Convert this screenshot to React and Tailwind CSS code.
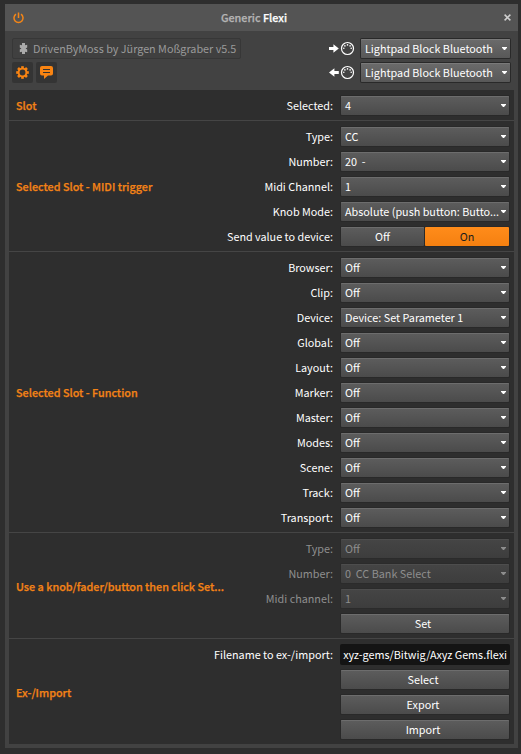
const FONT = "font-['Noto_Sans_CJK_SC','Noto_Sans',sans-serif]";

function Caret({ className = "" }) {
  return (
    <svg width="5" height="3" viewBox="0 0 5 3" className={`shrink-0 ${className}`}>
      <path d="M0 0H5V0.8L3 3H2L0 0.8Z" fill="currentColor" />
    </svg>
  );
}

const RAISED =
  "rounded-[1px] bg-linear-to-b from-[#5d5d5d] to-[#4b4b4b] shadow-[0_0_0_1px_#292929,inset_0_1px_0_#6d6d6d]";
const MUTED =
  "rounded-[1px] bg-linear-to-b from-[#454545] to-[#3d3d3d] shadow-[0_0_0_1px_#2b2b2b,inset_0_1px_0_#4d4d4d] text-[#8e8e8e]";

function Select({ value, disabled }) {
  return (
    <div className={`flex h-[19px] w-[168px] items-center justify-between pr-[3px] pl-1 ${disabled ? MUTED : RAISED}`}>
      <span className="whitespace-pre">{value}</span>
      <Caret />
    </div>
  );
}

function Button({ children }) {
  return <div className={`flex h-[19px] w-[168px] items-center justify-center pr-1 ${RAISED}`}>{children}</div>;
}

function Toggle() {
  return (
    <div className="flex h-[19px] w-[168px] gap-px">
      <div className={`flex w-[83px] items-center justify-center ${RAISED}`}>Off</div>
      <div className="flex w-[84px] items-center justify-center rounded-[1px] bg-linear-to-b from-[#ff8c1a] to-[#f58010] text-[#1c1c1c] shadow-[0_0_0_1px_#292929]">
        On
      </div>
    </div>
  );
}

function Filename() {
  return (
    <div className="-mr-px -ml-px flex h-[21px] w-[170px] items-center justify-end rounded-[2px] bg-[#141414] pr-[3px]">
      <span className="whitespace-nowrap">xyz-gems/Bitwig/Axyz Gems.flexi</span>
    </div>
  );
}

function Row({ label, disabled, children }) {
  return (
    <div className="flex h-[25px] items-center justify-end">
      {label && <span className={`mr-2 whitespace-nowrap ${disabled ? "text-[#8e8e8e]" : ""}`}>{label}</span>}
      {children}
    </div>
  );
}

function Section({ title, last, children }) {
  return (
    <section className={`flex items-center pt-[3px] pr-[5px] pb-[2px] pl-[7px] ${last ? "" : "border-b border-[#454545]"}`}>
      <h2 className="font-medium whitespace-nowrap text-[#f48316] [-webkit-text-stroke:0.25px_currentColor]">{title}</h2>
      <div className="flex-1">{children}</div>
    </section>
  );
}

function MidiIcon({ out }) {
  return (
    <svg width="27" height="15" viewBox="0 0 27 15" className="mr-[6px] shrink-0 text-white">
      <path
        d={
          out
            ? "M10.8 6H6.4V3.2L1 7.5L6.4 11.8V9H10.8Z"
            : "M1 6H5.4V3.2L10.8 7.5L5.4 11.8V9H1Z"
        }
        fill="currentColor"
      />
      <circle cx="19.5" cy="7.5" r="6" fill="none" stroke="currentColor" strokeWidth="1.2" />
      <g fill="currentColor">
        <circle cx="15.8" cy="7.2" r="0.8" />
        <circle cx="16.9" cy="4.9" r="0.8" />
        <circle cx="19.5" cy="3.9" r="0.8" />
        <circle cx="22.1" cy="4.9" r="0.8" />
        <circle cx="23.2" cy="7.2" r="0.8" />
      </g>
    </svg>
  );
}

function Port({ out }) {
  return (
    <div className="flex h-[21px] items-center">
      <MidiIcon out={out} />
      <div className="flex h-[19px] w-[149px] items-center justify-between rounded-[1px] bg-linear-to-b from-[#6b6b6b] to-[#585858] pr-[3px] pl-1 shadow-[0_0_0_1px_#292929,inset_0_1px_0_#7a7a7a]">
        <span className="whitespace-nowrap">Lightpad Block Bluetooth</span>
        <Caret />
      </div>
    </div>
  );
}

function Gear() {
  return (
    <svg width="13" height="13" viewBox="0 0 14 14">
      <g fill="#f98412">
        {[0, 45, 90, 135, 180, 225, 270, 315].map((a) => (
          <rect key={a} x="5.6" y="0.2" width="2.8" height="3" transform={`rotate(${a} 7 7)`} />
        ))}
      </g>
      <circle cx="7" cy="7" r="4.2" fill="none" stroke="#f98412" strokeWidth="2.1" />
    </svg>
  );
}

const FUNCTIONS = [
  ["Browser:", "Off"],
  ["Clip:", "Off"],
  ["Device:", "Device: Set Parameter 1"],
  ["Global:", "Off"],
  ["Layout:", "Off"],
  ["Marker:", "Off"],
  ["Master:", "Off"],
  ["Modes:", "Off"],
  ["Scene:", "Off"],
  ["Track:", "Off"],
  ["Transport:", "Off"],
];

export default function App() {
  return (
    <div className={`h-[754px] w-[521px] bg-[#2e2e2e] pt-1 pl-[5px] text-[10.8px] leading-[19px] text-white ${FONT}`}>
      <div className="h-[744px] w-[513px] bg-[#424242]">
        <header className="flex h-[27px] items-center justify-between bg-[#545454] pr-[7px] pl-2">
          <svg width="11" height="12" viewBox="0 0 11 12" fill="none" stroke="#f28518" strokeWidth="1.5">
            <path d="M5.5 0.5V6" />
            <path d="M3 2.2A4.5 4.5 0 1 0 8 2.2" />
          </svg>
          <h1 className="pr-5 font-medium text-[#b4b4b4] [-webkit-text-stroke:0.25px_currentColor]">
            Generic <span className="text-white">Flexi</span>
          </h1>
          <svg width="7" height="7" viewBox="0 0 7 7" stroke="#cfcfcf" strokeWidth="1.5">
            <path d="M0.6 0.6L6.4 6.4M6.4 0.6L0.6 6.4" />
          </svg>
        </header>

        <div className="flex h-[59px] justify-between pt-[7px] pr-2 pl-[7px]">
          <div className="flex flex-col gap-[3px]">
            <div className="flex h-[21px] w-[229px] items-center rounded-[2px] border border-[#373737] bg-[#404040] pl-[6px] text-[#9a9a9a]">
              <svg width="9" height="11" viewBox="0 0 9 11" className="mr-[5px] shrink-0" fill="#aaaaaa">
                <path d="M3 0H6V2.2L8.2 1.8V4.6L6.6 5.5L8.2 6.4V9.2L6 8.8V11H3V8.8L0.8 9.2V6.4L2.4 5.5L0.8 4.6V1.8L3 2.2Z" />
              </svg>
              <span className="whitespace-nowrap">DrivenByMoss by Jürgen Moßgraber v5.5</span>
            </div>
            <div className="flex gap-[3px]">
              <div className="flex size-[21px] items-center justify-center rounded-[2px] bg-[#343434]">
                <Gear />
              </div>
              <div className="flex size-[21px] items-center justify-center rounded-[2px] bg-[#343434]">
                <svg width="13" height="13" viewBox="0 0 13 13">
                  <path d="M2 0H11Q13 0 13 2V7.5Q13 9.5 11 9.5H8L4 13V9.5H2Q0 9.5 0 7.5V2Q0 0 2 0Z" fill="#f98412" />
                  <path d="M3 3.5H10M3 6.5H10" stroke="#343434" />
                </svg>
              </div>
            </div>
          </div>
          <div className="flex flex-col gap-[3px]">
            <Port />
            <Port out />
          </div>
        </div>

        <main className="mx-1 w-[505px] bg-[#2e2e2e]">
          <Section title="Slot">
            <Row label="Selected:">
              <Select value="4" />
            </Row>
          </Section>
          <Section title="Selected Slot - MIDI trigger">
            <Row label="Type:">
              <Select value="CC" />
            </Row>
            <Row label="Number:">
              <Select value="20  -" />
            </Row>
            <Row label="Midi Channel:">
              <Select value="1" />
            </Row>
            <Row label="Knob Mode:">
              <Select value="Absolute (push button: Butto..." />
            </Row>
            <Row label="Send value to device:">
              <Toggle />
            </Row>
          </Section>
          <Section title="Selected Slot - Function">
            {FUNCTIONS.map(([label, value]) => (
              <Row key={label} label={label}>
                <Select value={value} />
              </Row>
            ))}
          </Section>
          <Section title="Use a knob/fader/button then click Set...">
            <Row label="Type:" disabled>
              <Select value="Off" disabled />
            </Row>
            <Row label="Number:" disabled>
              <Select value="0  CC Bank Select" disabled />
            </Row>
            <Row label="Midi channel:" disabled>
              <Select value="1" disabled />
            </Row>
            <Row>
              <Button>Set</Button>
            </Row>
          </Section>
          <Section title="Ex-/Import" last>
            <Row label="Filename to ex-/import:">
              <Filename />
            </Row>
            <Row>
              <Button>Select</Button>
            </Row>
            <Row>
              <Button>Export</Button>
            </Row>
            <Row>
              <Button>Import</Button>
            </Row>
          </Section>
        </main>
      </div>
    </div>
  );
}
